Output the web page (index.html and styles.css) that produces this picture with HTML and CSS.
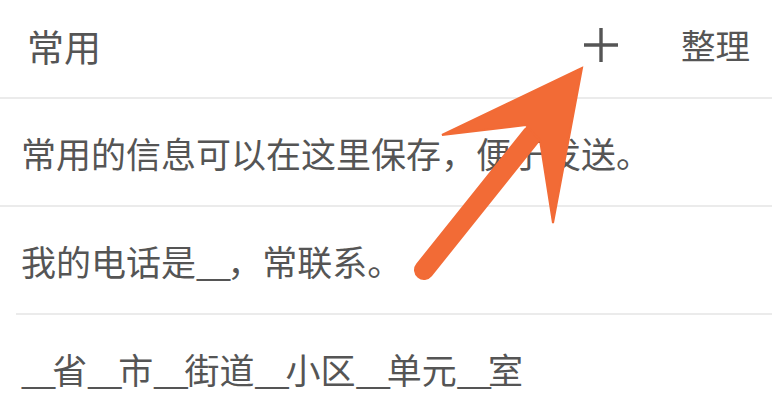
FILE: index.html
```html
<!DOCTYPE html>
<html lang="zh-CN">
<head>
<meta charset="utf-8">
<link rel="stylesheet" href="styles.css">
</head>
<body>
<div class="page">
  <header class="bar">
    <span class="title">常用</span>
    <span class="spacer"></span>
    <svg class="plus" viewBox="0 0 36 36" width="36" height="36" aria-label="添加">
      <path d="M18 1V35M1 18H35" stroke="#555" stroke-width="3.4" fill="none"/>
    </svg>
    <span class="action">整理</span>
  </header>
  <ul class="list">
    <li class="row">常用的信息可以在这里保存，便于发送。</li>
    <li class="row inset">我的电话是<span class="blank">__</span>，常联系。</li>
    <li class="row"><span class="blank">__</span>省<span class="blank">__</span>市<span class="blank">__</span>街道<span class="blank">__</span>小区<span class="blank">__</span>单元<span class="blank">__</span>室</li>
  </ul>
  <svg class="arrow" viewBox="0 0 772 401" width="772" height="401">
    <line x1="424" y1="270" x2="532" y2="135" stroke="#f26b36" stroke-width="20" stroke-linecap="round"/>
    <polygon points="582,68 442,135 526,125 540,140 553,223" fill="#f26b36" stroke="#f26b36" stroke-width="2" stroke-linejoin="miter"/>
  </svg>
</div>
</body>
</html>
```

FILE: styles.css
```css
html, body {
  margin: 0;
  padding: 0;
  background: #ffffff;
}

.page {
  position: relative;
  width: 772px;
  height: 401px;
  overflow: hidden;
  font-family: "Noto Sans CJK SC", "Noto Sans", sans-serif;
  color: #555555;
}

.bar {
  display: flex;
  align-items: center;
  height: 97px;
  padding: 0 22px 0 27px;
  border-bottom: 2px solid #ebebeb;
  box-sizing: content-box;
}

.title {
  font-size: 37px;
  line-height: 1;
  margin-top: -4px;
}

.spacer {
  flex: 1;
}

.plus {
  display: block;
  margin-top: -8px;
  margin-right: 62px;
}

.action {
  font-size: 34.5px;
  line-height: 1;
  margin-top: -8px;
}

.list {
  list-style: none;
  margin: 0;
  padding: 0;
}

.row {
  display: flex;
  align-items: center;
  height: 106px;
  padding-left: 21px;
  font-size: 35px;
  line-height: 1;
  border-bottom: 2px solid #ebebeb;
  white-space: nowrap;
}

.row.inset {
  border-bottom: none;
  padding-bottom: 2px;
  background: linear-gradient(#ebebeb, #ebebeb) no-repeat 16px 100% / calc(100% - 16px) 2px;
}

.row:last-child {
  border-bottom: none;
}

.blank {
  letter-spacing: -4px;
}

.arrow {
  position: absolute;
  left: 0;
  top: 0;
  pointer-events: none;
}
```
